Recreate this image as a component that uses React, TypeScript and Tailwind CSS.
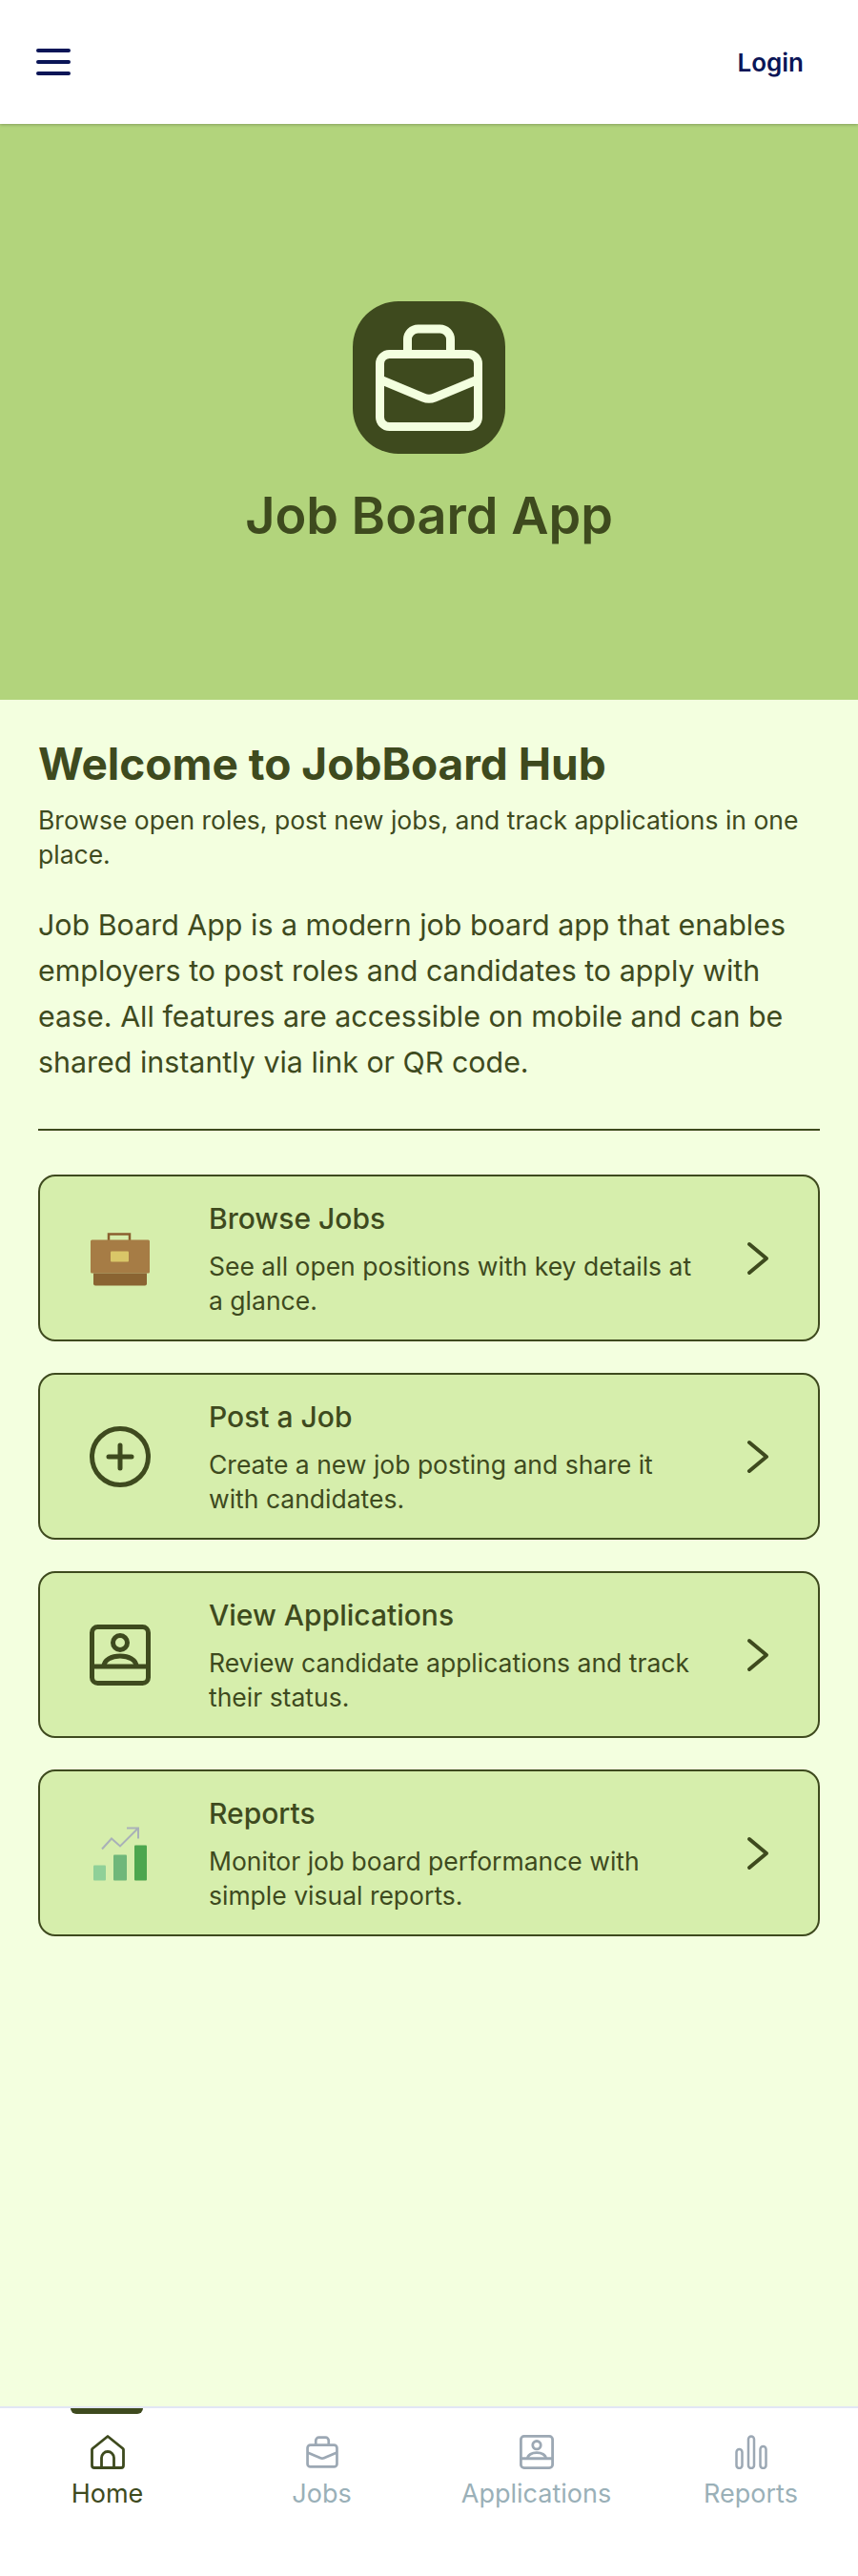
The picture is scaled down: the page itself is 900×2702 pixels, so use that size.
import type { ReactNode } from 'react'

const font = 'font-["Inter",sans-serif]'

function BriefcaseLine({ size, className }: { size: number; className: string }) {
  return (
    <svg width={size} height={size} viewBox="0 0 120 120" fill="none" stroke="currentColor" strokeWidth="9" className={className}>
      <rect x="8.5" y="35.5" width="103" height="76" rx="10" />
      <path d="M37.5 35V20a11 11 0 0 1 11-11h23a11 11 0 0 1 11 11v15" />
      <path d="M8.5 62L54 81q6 2.500 12 0L111.500 62" />
    </svg>
  )
}

function BriefcaseColor() {
  return (
    <svg width="64" height="64" viewBox="0 0 64 64" fill="none">
      <path d="M20 13V6.500h22V13" stroke="#8a5f2f" strokeWidth="2.500" />
      <rect x="1" y="12.500" width="62" height="35" rx="1.500" fill="#a67c45" />
      <path d="M4 47.500h56v11a2 2 0 0 1-2 2H6a2 2 0 0 1-2-2z" fill="#8a6432" />
      <rect x="22" y="24.500" width="19" height="11" rx="1" fill="#d9c668" />
    </svg>
  )
}

function PlusCircle() {
  return (
    <svg width="64" height="64" viewBox="0 0 64 64" fill="none" stroke="#3e4a1e" strokeWidth="5" strokeLinecap="round">
      <circle cx="32" cy="32" r="29.500" />
      <path d="M32 20v24M20 32h24" />
    </svg>
  )
}

function PersonCard({ size, strokeWidth, className }: { size: number; strokeWidth: number; className: string }) {
  return (
    <svg width={size} height={size} viewBox="0 0 64 64" fill="none" stroke="currentColor" strokeWidth={strokeWidth} className={className}>
      <rect x="2.500" y="2.500" width="59" height="59" rx="6" />
      <path d="M2 44h60" />
      <circle cx="32" cy="19" r="7.500" />
      <path d="M15 44c0-7 8-11 17-11s17 4 17 11" />
    </svg>
  )
}

function ChartColor() {
  return (
    <svg width="64" height="64" viewBox="0 0 64 64" fill="none">
      <rect x="4" y="44.500" width="13" height="16" rx="1" fill="#8fd098" />
      <rect x="25" y="33.500" width="14" height="27" rx="1" fill="#6fb77a" />
      <rect x="47" y="23.500" width="13" height="37" rx="1" fill="#4ca64e" />
      <path d="M13 27.500l10-11 9 8L51 5.500M39 5.500h12v11" stroke="#a9b1b8" strokeWidth="2" />
    </svg>
  )
}

function HomeIcon() {
  return (
    <svg width="36" height="36" viewBox="0 0 36 36" fill="none" stroke="#3e4a1e" strokeWidth="2.800" strokeLinejoin="round">
      <path d="M18 1.500L2.500 14a2 2 0 0 0-1 2v16a2.500 2.500 0 0 0 2.500 2.500h28a2.500 2.500 0 0 0 2.500-2.500V16a2 2 0 0 0-1-2z" />
      <path d="M11.500 34.500V24a6.500 6.500 0 0 1 13 0v10.500" />
    </svg>
  )
}

function BarsIcon() {
  return (
    <svg width="36" height="36" viewBox="0 0 36 36" fill="none" stroke="#9ca8b4" strokeWidth="2.500">
      <rect x="2.500" y="15" width="6" height="20" rx="3" />
      <rect x="15" y="1.500" width="6" height="33.500" rx="3" />
      <rect x="27.500" y="12" width="6" height="23" rx="3" />
    </svg>
  )
}

interface Feature {
  title: string
  desc: string
  icon: ReactNode
}

const features: Feature[] = [
  {
    title: 'Browse Jobs',
    desc: 'See all open positions with key details at a glance.',
    icon: <BriefcaseColor />,
  },
  {
    title: 'Post a Job',
    desc: 'Create a new job posting and share it with candidates.',
    icon: <PlusCircle />,
  },
  {
    title: 'View Applications',
    desc: 'Review candidate applications and track their status.',
    icon: <PersonCard size={64} strokeWidth={5} className="text-[#3e4a1e]" />,
  },
  {
    title: 'Reports',
    desc: 'Monitor job board performance with simple visual reports.',
    icon: <ChartColor />,
  },
]

const tabs = [
  { label: 'Home', icon: <HomeIcon />, active: true },
  { label: 'Jobs', icon: <BriefcaseLine size={36} className="text-[#9ca8b4]" />, active: false },
  { label: 'Applications', icon: <PersonCard size={36} strokeWidth={5} className="text-[#9ca8b4]" />, active: false },
  { label: 'Reports', icon: <BarsIcon />, active: false },
]

export default function App() {
  return (
    <div className={`${font} flex h-[2702px] flex-col bg-[#f3ffdf] text-[#3e4a1e]`}>
      <header className="relative z-10 flex h-[130px] items-center justify-between bg-white pl-[38px] pr-[57px] shadow-[0_1px_3px_rgba(0,0,0,0.25)]">
        <div className="flex w-[36px] flex-col gap-[8px]">
          <span className="h-[4px] rounded-full bg-[#0a1557]" />
          <span className="h-[4px] rounded-full bg-[#0a1557]" />
          <span className="h-[4px] rounded-full bg-[#0a1557]" />
        </div>
        <span className="text-[26px] font-semibold text-[#0a1557]">Login</span>
      </header>

      <section className="flex h-[604px] flex-col items-center bg-[#b2d47c] pt-[186px]">
        <div className="flex h-[160px] w-[160px] items-center justify-center rounded-[48px] bg-[#3e4a1e]">
          <BriefcaseLine size={120} className="text-[#f3ffdf]" />
        </div>
        <h1 className="mt-[30px] text-[54px] font-semibold leading-[70px]">Job Board App</h1>
      </section>

      <main className="flex-1 px-[40px] pt-[39px]">
        <h2 className="text-[46px] font-bold leading-[56px]">Welcome to JobBoard Hub</h2>
        <p className="mt-[13px] text-[26.5px] leading-[36px]">
          Browse open roles, post new jobs, and track applications in one place.
        </p>
        <p className="mt-[32px] text-[30.4px] leading-[48px]">
          Job Board App is a modern job board app that enables employers to post roles and candidates to apply with
          ease. All features are accessible on mobile and can be shared instantly via link or QR code.
        </p>
        <hr className="mt-[46px] border-t-2 border-[#3e4a1e]" />

        <div className="mt-[46px] flex flex-col gap-[33px]">
          {features.map((f) => (
            <div key={f.title} className="flex h-[175px] items-center rounded-[18px] border-2 border-[#3e4a1e] bg-[#d6eeac] pl-[52px] pr-[51px]">
              <div className="w-[64px] shrink-0">{f.icon}</div>
              <div className="ml-[61px] flex-1">
                <div className="text-[30px] font-medium leading-[40px]">{f.title}</div>
                <div className="mt-[12px] text-[26.5px] leading-[36px]">{f.desc}</div>
              </div>
              <svg width="24" height="36" viewBox="0 0 24 36" fill="none" stroke="#3e4a1e" strokeWidth="4" strokeLinecap="round" strokeLinejoin="round" className="ml-[48px] shrink-0">
                <path d="M3 3l18 15L3 33" />
              </svg>
            </div>
          ))}
        </div>
      </main>

      <nav className="flex h-[178px] border-t-2 border-[#e2e6f5] bg-white">
        {tabs.map((t) => (
          <div key={t.label} className="relative flex flex-1 flex-col items-center pt-[28px]">
            {t.active && <span className="absolute left-[74px] top-0 h-[6px] w-[76px] rounded-b-[6px] bg-[#3e4a1e]" />}
            {t.icon}
            <span className={`mt-[8px] text-[27px] leading-[36px] ${t.active ? 'text-[#3e4a1e]' : 'text-[#9ab0b8]'}`}>
              {t.label}
            </span>
          </div>
        ))}
      </nav>
    </div>
  )
}
